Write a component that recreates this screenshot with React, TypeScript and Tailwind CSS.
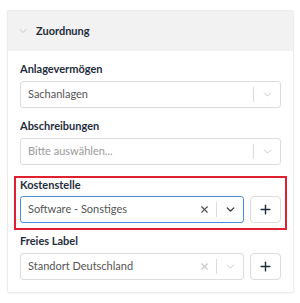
import { ChevronDown, X, Plus } from 'lucide-react';

interface SelectProps {
    value: string;
    placeholder?: boolean;
    focused?: boolean;
    clearable?: boolean;
}

const SelectBox = ({ value, placeholder, focused, clearable }: SelectProps) => {
    const iconColor = focused ? 'text-[#333]' : 'text-[#c8c8c8]';
    return (
        <div
            className={`flex h-[27px] flex-1 items-center rounded-[3px] border bg-white ${
                focused ? 'border-[#4a90d9]' : 'border-[#dcdcdc]'
            }`}
        >
            <span
                className={`flex-1 truncate pl-[7px] text-[11px] ${placeholder ? 'text-[#9a9a9a]' : 'text-[#555]'}`}
            >
                {value}
            </span>
            {clearable && (
                <span className="flex w-[24px] items-center justify-center">
                    <X size={11} strokeWidth={2.5} className={focused ? 'text-[#555]' : 'text-[#c8c8c8]'} />
                </span>
            )}
            <span className="h-[15px] w-px bg-[#dcdcdc]" />
            <span className="flex w-[26px] items-center justify-center">
                <ChevronDown size={13} strokeWidth={focused ? 2.5 : 1.75} className={iconColor} />
            </span>
        </div>
    );
};

const PlusButton = () => (
    <button
        type="button"
        className="flex h-[27px] w-[31px] items-center justify-center rounded-[4px] border border-[#dcdcdc] bg-white text-[#1f2d3d]"
    >
        <Plus size={15} strokeWidth={2.25} />
    </button>
);

const Label = ({ children }: { children: string }) => (
    <p className="mb-[4px] text-[11px] leading-[16px] font-bold text-[#1f2d3d]">{children}</p>
);

const App = () => {
    return (
        <div className="min-h-[303px] bg-white pt-[10px] pl-[7px] font-['Lato',sans-serif]">
            <section className="w-[287px] overflow-hidden rounded-[2px] border border-[#ececec] shadow-[0_1px_2px_rgba(0,0,0,0.04)]">
                <header className="flex h-[40px] items-center gap-[7px] bg-[#f2f2f2] pl-[9px]">
                    <ChevronDown size={12} strokeWidth={1.5} className="text-[#b8b8b8]" />
                    <h2 className="text-[11px] font-bold text-[#1f2d3d]">Zuordnung</h2>
                </header>

                <div className="bg-white px-[12px] pt-[10px] pb-[12px]">
                    <div>
                        <Label>Anlagevermögen</Label>
                        <SelectBox value="Sachanlagen" />
                    </div>

                    <div className="mt-[10px]">
                        <Label>Abschreibungen</Label>
                        <SelectBox value="Bitte auswählen..." placeholder />
                    </div>

                    <div className="-mx-[6px] mt-[11px] border-2 border-[#e0202e] px-[4px] pb-[5px]">
                        <p className="mb-[4px] text-[11px] leading-[14px] font-bold text-[#1f2d3d]">Kostenstelle</p>
                        <div className="flex gap-[6px]">
                            <SelectBox value="Software - Sonstiges" focused clearable />
                            <PlusButton />
                        </div>
                    </div>

                    <div className="mt-[3px]">
                        <Label>Freies Label</Label>
                        <div className="flex gap-[6px]">
                            <SelectBox value="Standort Deutschland" clearable />
                            <PlusButton />
                        </div>
                    </div>
                </div>
            </section>
        </div>
    );
};

export default App;
